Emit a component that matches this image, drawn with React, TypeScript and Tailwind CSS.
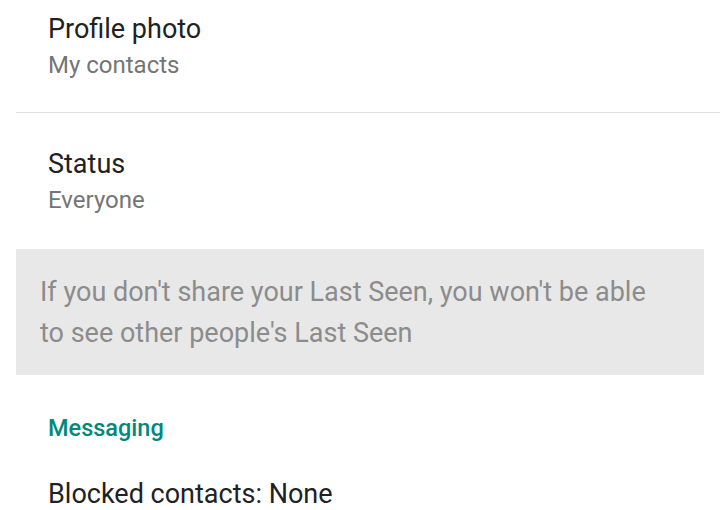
export default function App() {
  return (
    <div className="w-[720px] h-[510px] overflow-hidden bg-white" style={{ fontFamily: 'Roboto, "Noto Sans", sans-serif' }}>
      <div className="pl-12 pt-[12.3px] pb-[31.9px]">
        <div className="text-[27px] leading-[34px] text-[#212121]">Profile photo</div>
        <div className="mt-[3.8px] text-[24px] leading-[30px] text-[#757575]">My contacts</div>
      </div>
      <div className="ml-4 h-px bg-[#e0e0e0]" />
      <div className="pl-12 pt-[34.3px] pb-[33.9px]">
        <div className="text-[27px] leading-[34px] text-[#212121]">Status</div>
        <div className="mt-[3.8px] text-[24px] leading-[30px] text-[#757575]">Everyone</div>
      </div>
      <div className="ml-4 mr-4 h-[126px] bg-[#e8e8e8] pl-6 pt-[22.7px]">
        <div className="text-[27px] leading-[41.6px] text-[#8c8c8c]">
          If you don't share your Last Seen, you won't be able
          <br />
          to see other people's Last Seen
        </div>
      </div>
      <div className="pl-12 pt-[37.7px]">
        <div className="text-[23.5px] leading-[30px] font-medium text-[#00897b]">Messaging</div>
        <div className="mt-[34.1px] text-[27px] leading-[34px] text-[#212121]">Blocked contacts: None</div>
      </div>
    </div>
  );
}
